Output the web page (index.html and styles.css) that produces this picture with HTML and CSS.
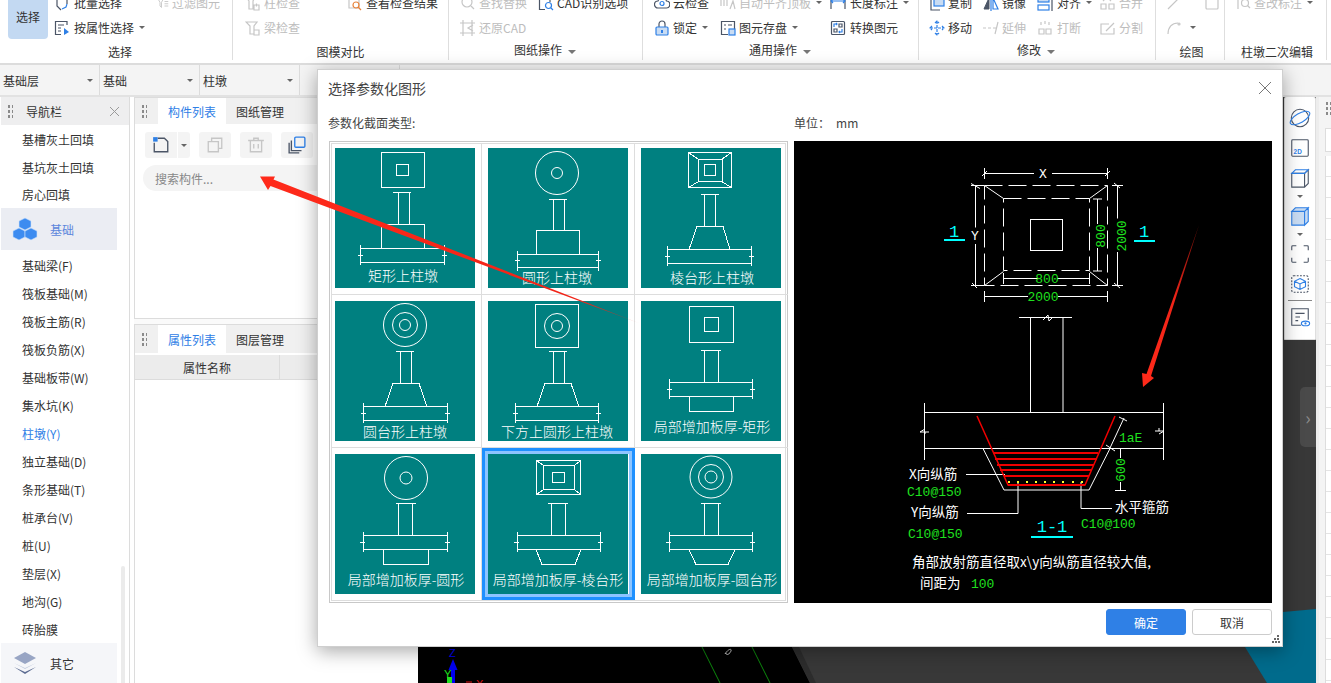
FILE: index.html
```html
<!DOCTYPE html>
<html lang="zh-CN">
<head>
<meta charset="utf-8">
<title>选择参数化图形</title>
<link rel="stylesheet" href="styles.css">
</head>
<body>
<header class="ribbon">
  <section class="group g1">
    <div class="cols">
      <button class="select-btn">选择</button>
      <div class="col c1">
        <div class="item"><svg class="ic" viewBox="0 0 16 16"><path class="dk" d="M3 1v10l4 4M13 1v8"/><path class="bl" d="M8 14l4-2 1-3"/></svg>批量选择</div>
        <div class="item"><svg class="ic" viewBox="0 0 16 16"><path class="dk" d="M13 5V1.500H1.500v13H7M4 5h6M4 8h3M4 11h3"/><path class="fb" d="M10 8l5 4-5 3z"/></svg>按属性选择<i class="caret"></i></div>
      </div>
      <div class="col">
        <div class="item off"><svg class="ic small" viewBox="0 0 16 16"><path class="gr" d="M1 2h8L6 7v7L4 12V7zM10 6h5M10 9h5M10 12h5"/></svg>过滤图元</div>
      </div>
    </div>
    <div class="title">选择</div>
  </section>
  <section class="group g2">
    <div class="cols">
      <div class="col c2">
        <div class="item off"><svg class="ic" viewBox="0 0 16 16"><path class="gr" d="M1 2h9l-2 4v8H4V6zM9 10h5v5H9zM11.500 8.500v3"/></svg>柱检查</div>
        <div class="item off"><svg class="ic" viewBox="0 0 16 16"><path class="gr" d="M1 2h11L9 6v8H5V6zM9 10h5v5H9z"/></svg>梁检查</div>
      </div>
      <div class="col">
        <div class="item"><svg class="ic" viewBox="0 0 16 16"><path class="gr" d="M2 1h10v12H2z"/><circle class="or" cx="9" cy="10" r="3"/><path class="or" d="M11 12l3 3"/></svg>查看检查结果</div>
      </div>
    </div>
    <div class="title">图模对比</div>
  </section>
  <section class="group g3">
    <div class="cols">
      <div class="col c3">
        <div class="item off"><svg class="ic" viewBox="0 0 16 16"><circle class="gr" cx="7" cy="7" r="5"/><path class="gr" d="M11 11l3 3"/></svg>查找替换</div>
        <div class="item off"><svg class="ic" viewBox="0 0 16 16"><path class="gr" d="M3 0v16M12 0v16M0 3h15M0 13h15M13 5L8 8l5 3"/></svg>还原CAD</div>
      </div>
      <div class="col">
        <div class="item"><svg class="ic" viewBox="0 0 16 16"><path class="dk" d="M12 7V1.500H1.500v13H7"/><circle class="bls" cx="10.500" cy="10.500" r="3"/><path class="bls" d="M13 13l2 2M4 4h5"/></svg>CAD识别选项</div>
      </div>
    </div>
    <div class="title raised">图纸操作<i class="caret big"></i></div>
  </section>
  <section class="group g4">
    <div class="cols">
      <div class="col c4a">
        <div class="item"><svg class="ic" viewBox="0 0 16 16"><path class="dk" d="M4 13a3.500 3.500 0 0 1 0-7 4.500 4.500 0 0 1 8.500 0 3.500 3.500 0 0 1-.5 7z"/><circle class="bls" cx="8" cy="8.500" r="2"/></svg>云检查</div>
        <div class="item"><svg class="ic" viewBox="0 0 16 16"><path class="dk" d="M5 7V4a3 3 0 0 1 6 0v3"/><rect class="lk" x="2" y="7" width="12" height="8" rx="1"/><path class="fb" d="M7 10h2v3H7z"/></svg>锁定<i class="caret"></i></div>
      </div>
      <div class="col c4b">
        <div class="item off"><svg class="ic" viewBox="0 0 16 16"><path class="gr" d="M1 2v9M4 2v9M7 2v9M10 14l3-8 2 8"/></svg>自动平齐顶板<i class="caret"></i></div>
        <div class="item"><svg class="ic" viewBox="0 0 16 16"><path class="dk" d="M8 14.500H1.500v-13h13V9M4 5h2M8 5h4M4 9h2"/><rect class="lk" x="9" y="9" width="6" height="6"/></svg>图元存盘<i class="caret"></i></div>
      </div>
      <div class="col">
        <div class="item"><svg class="ic wide" viewBox="0 0 16 16"><path class="dk" d="M1 2v12M15 2v12"/><path class="bls" d="M1 6h14M3 4L1 6l2 2M13 4l2 2-2 2"/></svg>长度标注<i class="caret"></i></div>
        <div class="item"><svg class="ic wide" viewBox="0 0 16 16"><rect class="dk" x="1.500" y="1.500" width="13" height="13" rx="1"/><path class="bls" d="M4 7V4h3M6 3l1 1-1 1M12 9v3H9M10 13l-1-1 1-1"/><path class="dk" d="M9 4h3v3H9zM4 9h3v3H4z"/></svg>转换图元</div>
      </div>
    </div>
    <div class="title raised">通用操作<i class="caret big"></i></div>
  </section>
  <section class="group g5">
    <div class="cols">
      <div class="col c5">
        <div class="item"><svg class="ic" viewBox="0 0 16 16"><path class="dk" d="M2 4v11h9"/><rect class="lk" x="5" y="1" width="10" height="10"/></svg>复制</div>
        <div class="item"><svg class="ic" viewBox="0 0 16 16"><path class="bls" d="M8 1v14M1 8h14M6 3l2-2 2 2M6 13l2 2 2-2M3 6L1 8l2 2M13 6l2 2-2 2" stroke-dasharray="3 1"/></svg>移动</div>
      </div>
      <div class="col c5">
        <div class="item"><svg class="ic" viewBox="0 0 16 16"><path class="fd" d="M1 14L6 3v11z"/><path class="bls" d="M10 3l5 11h-5zM8 1v15"/></svg>镜像</div>
        <div class="item off"><svg class="ic" viewBox="0 0 16 16"><path class="gr" d="M0 8h3M5 8h3M10 8h3M15 2l-3 12"/></svg>延伸</div>
      </div>
      <div class="col c5c">
        <div class="item"><svg class="ic wide" viewBox="0 0 16 16"><rect class="lk" x="1" y="2" width="11" height="5"/><rect class="bls" x="1" y="10" width="11" height="5"/><path class="dk" d="M15 1v15"/></svg>对齐<i class="caret"></i></div>
        <div class="item off"><svg class="ic wide" viewBox="0 0 16 16"><path class="gr" d="M2 9h5v5H2zM9 9h5v5H9zM4 2v3M8 1v3M12 2v3"/></svg>打断</div>
      </div>
      <div class="col">
        <div class="item off"><svg class="ic" viewBox="0 0 16 16"><path class="gr" d="M1 9h5v5H1zM9 9h5v5H9zM3 6l4-4 4 4"/></svg>合并</div>
        <div class="item off"><svg class="ic" viewBox="0 0 16 16"><path class="gr" d="M14 8v6H1V4h8M6 11l8-8"/></svg>分割</div>
      </div>
    </div>
    <div class="title raised">修改<i class="caret big"></i></div>
  </section>
  <section class="group g6">
    <div class="cols">
      <div class="col c6">
        <div class="item off"><svg class="ic" viewBox="0 0 16 16"><path class="gr" d="M2 14L14 2"/></svg></div>
        <div class="item off"><svg class="ic" viewBox="0 0 16 16"><path class="gr" d="M2 14C2 7 6 3 12 3"/><circle class="gr" cx="13" cy="4" r="1"/></svg><i class="caret"></i></div>
      </div>
      <div class="col">
        <div class="item off"><svg class="ic" viewBox="0 0 16 16"><rect class="gr" x="2" y="1" width="12" height="13" rx="1"/></svg></div>
      </div>
    </div>
    <div class="title">绘图</div>
  </section>
  <section class="group g7">
    <div class="cols">
      <div class="col">
        <div class="item off"><svg class="ic" viewBox="0 0 16 16"><path class="gr" d="M3 14V3h5"/><circle class="gr" cx="10" cy="8" r="3.500"/><path class="gr" d="M12.500 10.500L15 13"/></svg>查改标注<i class="caret"></i></div>
      </div>
    </div>
    <div class="title">柱墩二次编辑</div>
  </section>
</header>

<div class="selectors">
  <div class="sel-cell">基础层<i class="caret"></i></div>
  <div class="sel-cell">基础<i class="caret"></i></div>
  <div class="sel-cell">柱墩<i class="caret"></i></div>
  <div class="sel-cell"></div>
</div>

<main class="workspace">
  <nav class="nav">
    <div class="nav-head"><span class="grip"></span><span class="nav-title">导航栏</span><svg class="x-ic" viewBox="0 0 9 9"><path d="M0 0l9 9M9 0L0 9"/></svg></div>
    <div class="nav-item">基槽灰土回填</div>
    <div class="nav-item">基坑灰土回填</div>
    <div class="nav-item last">房心回填</div>
    <div class="nav-group active">
      <svg class="cubes" viewBox="0 0 26 24"><path class="cube" d="M13 1l6 3v6l-6 3-6-3V4z"/><path class="cube" d="M7 11l6 3v6l-6 3-6-3v-6z"/><path class="cube" d="M19 11l6 3v6l-6 3-6-3v-6z"/></svg>
      <span>基础</span>
    </div>
    <div class="nav-item first">基础梁(F)</div>
    <div class="nav-item">筏板基础(M)</div>
    <div class="nav-item">筏板主筋(R)</div>
    <div class="nav-item">筏板负筋(X)</div>
    <div class="nav-item">基础板带(W)</div>
    <div class="nav-item">集水坑(K)</div>
    <div class="nav-item current">柱墩(Y)</div>
    <div class="nav-item">独立基础(D)</div>
    <div class="nav-item">条形基础(T)</div>
    <div class="nav-item">桩承台(V)</div>
    <div class="nav-item">桩(U)</div>
    <div class="nav-item">垫层(X)</div>
    <div class="nav-item">地沟(G)</div>
    <div class="nav-item">砖胎膜</div>
    <div class="nav-group other">
      <svg class="cubes" viewBox="0 0 26 24"><path class="l1" d="M13 1l11 6-11 6L2 7z"/><path class="l2" d="M2 12l11 5 11-5-11 6z"/><path class="l3" d="M2 16l11 5 11-5-11 7z"/></svg>
      <span>其它</span>
    </div>
    <span class="nav-scroll"></span>
  </nav>

  <div class="middle">
    <section class="panel list-panel">
      <div class="tabs"><span class="grip"></span><span class="tab on">构件列表</span><span class="tab">图纸管理</span></div>
      <div class="tools">
        <span class="tool new"><svg class="ic tool-ic" viewBox="0 0 16 16"><path class="dk" d="M5 2h6l3 3v9H2V6"/><path class="fb" d="M1 1h4v4H1z"/></svg></span><span class="tool drop"><i class="caret"></i></span>
        <span class="tool"><svg class="ic tool-ic" viewBox="0 0 16 16"><path class="gr" d="M2 5h9v9H2zM5 5V2h9v9h-3"/></svg></span>
        <span class="tool"><svg class="ic tool-ic" viewBox="0 0 16 16"><path class="gr" d="M1 4h14M6 4V2h4v2M3 4v10h10V4M6 7v4M10 7v4"/></svg></span>
        <span class="tool"><svg class="ic tool-ic" viewBox="0 0 16 16"><path class="dk" d="M1 6v9h9M3 4v9h9"/><rect class="bls" x="6" y="1" width="9" height="9" rx="1"/></svg></span>
      </div>
      <div class="search">搜索构件...</div>
    </section>
    <section class="panel prop-panel">
      <div class="tabs tall"><span class="grip"></span><span class="tab on">属性列表</span><span class="tab">图层管理</span></div>
      <div class="table-head"><span class="th-name">属性名称</span><span class="th-val">属性值</span></div>
    </section>
  </div>

  <div class="canvas">
    <svg class="scene" viewBox="418 97 898 586" preserveAspectRatio="none">
      <path d="M418 97H792V647L810 683H418z" fill="#000"/>
      <path d="M792 647L810 683H816L799 647z" fill="#2c2c2c"/>
      <path d="M1283 612L1316 609V683H1267L1245 647z" fill="#006b8c"/>
      <path d="M702 647L720 683M752 647L770 683" stroke="#0c8a0c" fill="none"/>
      <path d="M725 654c3-5 7-6 6-3s-5 5-5 2" stroke="#ccc" fill="none" stroke-width="1"/>
      <path d="M451 683V670h-2.500l4.500-11 4.500 11H455v13z" fill="#0000f0"/>
      <text class="axis" x="449" y="657" fill="#0000f0">Z</text>
      <text class="axis" x="444" y="678" fill="#1fe01f">Y</text>
      <rect x="447" y="677" width="5" height="6" fill="#1fe01f"/>
      <text class="axis" x="476" y="688" fill="#e01010">X</text>
      <path d="M466 682h6" stroke="#e01010"/>
    </svg>
    <div class="view-tools">
      <svg class="vt" viewBox="0 0 24 24"><ellipse class="dk" cx="12" cy="12" rx="9.500" ry="9.500"/><ellipse class="bls" cx="12" cy="12" rx="12" ry="5" transform="rotate(-30 12 12)"/></svg>
      <svg class="vt" viewBox="0 0 24 24"><rect class="dk" x="3" y="3" width="18" height="18" rx="1"/><text class="twod" x="5" y="19">2D</text></svg>
      <svg class="vt cut" viewBox="0 0 24 24"><path class="dk" d="M3 7h14v15H3zM17 7l4-4v15l-4 4"/><path class="bls" d="M3 7l4-4h14l-4 4z"/></svg>
      <i class="caret vt-caret"></i>
      <svg class="vt cut" viewBox="0 0 24 24"><path class="lk" d="M3 7h14v15H3zM17 7l4-4v15l-4 4zM3 7l4-4h14l-4 4z"/></svg>
      <i class="caret vt-caret"></i>
      <svg class="vt" viewBox="0 0 24 24"><path class="dk" d="M3 8V4a1 1 0 0 1 1-1h4M16 3h4a1 1 0 0 1 1 1v4M21 16v4a1 1 0 0 1-1 1h-4M8 21H4a1 1 0 0 1-1-1v-4"/></svg>
      <svg class="vt" viewBox="0 0 24 24"><rect class="dk" x="3" y="3" width="18" height="18" rx="2" stroke-dasharray="2 1.500"/><path class="bls" d="M12 6l6 3v6l-6 3-6-3V9zM6 9l6 3 6-3M12 12v6"/></svg>
      <span class="vt-sep"></span>
      <svg class="vt" viewBox="0 0 24 24"><path class="dk" d="M13 21H3V3h18v12M7 8h10M7 12h5M7 16h3"/><ellipse class="bls" cx="18" cy="19" rx="4.500" ry="2.500"/><circle class="fb" cx="18" cy="19" r="1.200"/></svg>
    </div>
    <div class="handle"><span>›</span></div>
  </div>

  <aside class="side">
    <span class="grip side-grip"></span>
    <div class="side-tab"></div>
    <div class="side-rows"></div>
  </aside>
</main>

<div class="dialog">
  <div class="dlg-head"><span>选择参数化图形</span><svg class="x-ic big" viewBox="0 0 12 12"><path d="M0 0l12 12M12 0L0 12"/></svg></div>
  <div class="dlg-labels"><span class="lab-left">参数化截面类型:</span><span>单位：</span><span class="unit">mm</span></div>
  <div class="dlg-body">
    <div class="shapes">
      <div class="shape-grid">
        <div class="cell"><svg class="thumb" viewBox="0 0 140 140">
          <rect x="46.500" y="4.500" width="43" height="35"/><rect x="61.500" y="16.500" width="12" height="11"/>
          <path d="M58 44.500h18M63.500 44.500v32M74.500 44.500v32"/><path d="M46.500 100.500v-24h43v24"/>
          <path d="M25 100.500h84M25 114.500h84M25.500 97v20M109.500 97v20M23 107.500h5M107 107.500h5"/>
          <text x="68" y="133">矩形上柱墩</text></svg></div>
        <div class="cell"><svg class="thumb" viewBox="0 0 140 140">
          <circle cx="69" cy="25" r="21.500"/><circle cx="69" cy="25" r="5.500"/>
          <path d="M61 51.500h18M65.500 51.500v31M76.500 51.500v31"/><path d="M48.500 106.500v-24h43v24"/>
          <path d="M29 106.500h81M29 119.500h81M29.500 103v20M110.500 103v20M27 112.500h5M108 112.500h5"/>
          <text x="69" y="135">圆形上柱墩</text></svg></div>
        <div class="cell"><svg class="thumb" viewBox="0 0 140 140">
          <rect x="47.500" y="4.500" width="43" height="35"/><rect x="57.500" y="11.500" width="24" height="22"/><rect x="63.500" y="16.500" width="11" height="11"/>
          <path d="M47.500 4.500l10 7M90.500 4.500l-10 7M47.500 39.500l10-6M90.500 39.500l-10-6"/>
          <path d="M60 46.500h18M63.500 46.500v32M74.500 46.500v32M56 78.500h26M56 78.500l-8 23M82 78.500l7 23"/>
          <path d="M26 101.500h84M26 115.500h84M26.500 98v20M110.500 98v20M24 108.500h5M108 108.500h5"/>
          <text x="71" y="135">棱台形上柱墩</text></svg></div>
        <div class="cell"><svg class="thumb" viewBox="0 0 140 140">
          <circle cx="70" cy="24" r="21.500"/><circle cx="70" cy="24" r="12.500"/><circle cx="70" cy="24" r="5.500"/>
          <path d="M61 50.500h18M65.500 50.500v32M76.500 50.500v32M58 82.500h26M58 82.500l-8 23M84 82.500l8 23"/>
          <path d="M28 105.500h84M28 119.500h84M28.500 102v20M112.500 102v20M26 112.500h5M110 112.500h5"/>
          <text x="70" y="136">圆台形上柱墩</text></svg></div>
        <div class="cell"><svg class="thumb" viewBox="0 0 140 140">
          <rect x="47.500" y="3.500" width="43" height="43"/><circle cx="69" cy="25" r="12.500"/><circle cx="69" cy="25" r="5.500"/>
          <path d="M61 50.500h18M65.500 50.500v32M76.500 50.500v32M57 82.500h26M57 82.500l-8 23M83 82.500l8 23"/>
          <path d="M27 105.500h83M27 119.500h83M27.500 102v20M110.500 102v20M25 112.500h5M108 112.500h5"/>
          <text x="69" y="136">下方上圆形上柱墩</text></svg></div>
        <div class="cell"><svg class="thumb" viewBox="0 0 140 140">
          <rect x="48.500" y="5.500" width="44" height="36"/><rect x="63.500" y="16.500" width="14" height="14"/>
          <path d="M60 49.500h20M63.500 49.500v32M77.500 49.500v32"/>
          <path d="M28 81.500h83M28 95.500h83M28.500 78v20M111.500 78v20M26 88.500h5M109 88.500h5M48.500 95.500v15h44v-15"/>
          <text x="71" y="131">局部增加板厚-矩形</text></svg></div>
        <div class="cell"><svg class="thumb" viewBox="0 0 140 140">
          <circle cx="71" cy="24" r="21.500"/><circle cx="71" cy="24" r="6"/>
          <path d="M61 49.500h20M63.500 49.500v32M77.500 49.500v32"/>
          <path d="M28 81.500h84M28 95.500h84M28.500 78v20M112.500 78v20M25 88.500h5M110 88.500h5M48.500 95.500v15h45v-15"/>
          <text x="71" y="131">局部增加板厚-圆形</text></svg></div>
        <div class="cell selected"><svg class="thumb" viewBox="0 0 140 140">
          <rect x="48.500" y="6.500" width="44" height="34"/><rect x="55.500" y="11.500" width="31" height="24"/><rect x="64.500" y="18.500" width="12" height="10"/>
          <path d="M48.500 6.500l7 5M92.500 6.500l-6 5M48.500 40.500l7-5M92.500 40.500l-6-5"/>
          <path d="M60 49.500h20M63.500 49.500v32M77.500 49.500v32"/>
          <path d="M29 81.500h83M29 95.500h83M29.500 78v20M112.500 78v20M26 88.500h5M110 88.500h5M48 95.500l6 15h33l6-15"/>
          <text x="70" y="131">局部增加板厚-棱台形</text></svg></div>
        <div class="cell"><svg class="thumb" viewBox="0 0 140 140">
          <circle cx="70" cy="23" r="21"/><circle cx="70" cy="23" r="12.500"/><circle cx="70" cy="23" r="6"/>
          <path d="M60 49.500h20M63.500 49.500v32M77.500 49.500v32"/>
          <path d="M28 81.500h83M28 95.500h83M28.500 78v20M111.500 78v20M25 88.500h5M109 88.500h5M48 95.500l7 15h32l7-15"/>
          <text x="71" y="131">局部增加板厚-圆台形</text></svg></div>
      </div>
    </div>
    <svg class="preview" viewBox="794 141 478 462">
      <g class="w">
        <path d="M984 173.500h50M1052 173.500h56M984.500 168v11M1107.500 168v11M982 176l5-5M1105 176l5-5"/>
        <path class="dash-o" d="M984.500 185.500h123v100h-123z"/>
        <path class="dash-i" d="M1003.500 198.500h86v72h-86z"/>
        <path d="M984.500 185.500l19 13M1107.500 185.500l-18 13M984.500 285.500l19-14M1107.500 285.500l-18-14"/>
        <rect x="1030.500" y="219.500" width="32" height="31"/>
        <path d="M975.500 185.500v42M975.500 244v41.500M971 183.500l9 5M971 285.500h13M971 185.500h13M977 288l-5-5"/>
        <path d="M1117.500 185.500v33M1117.500 252v33.500M1112 185.500h11M1112 285.500h11M1114 183l6 5M1114 283l6 5"/>
        <path d="M1097.500 199v25M1097.500 248v23M1093 199h9M1093 271h9"/>
        <path d="M1003 278.500h36M1057 278.500h32M1003.500 273v11M1089.500 273v11"/>
        <path d="M984 296.500h44M1058 296.500h50M984.500 291v11M1107.500 291v11"/>
        <path d="M1019 317.500h53M1030.500 317.500v95M1063 317.500v95M1043 320l5-5 1 6 4-4"/>
        <path d="M924.500 403v57M1163.500 403v57M924 412.500h239M924 448.500h239"/>
        <path d="M920 432h9M920 432l5-3M925 432v2M1155 431h9M1164 431l-5 3M1159 431v-3"/>
        <path d="M983 448.500l21 41.500h85l21-41.500"/>
        <path d="M966 474.500h39M967 513.500h51V482M1112 508.500h-31V482"/>
        <path d="M1110 448l14-30M1106 445l9 6M1119 417l8 4M1120.500 448v10M1120.500 482v8M1115 490.500h11"/>
      </g>
      <g class="r">
        <path d="M977 416l31 69h77l30-69" stroke-width="1.500"/>
        <path d="M993 453h105M995 459h102M997 465h97M1000 470h92M1004 476h85M1008 485h77" stroke-width="2"/>
      </g>
      <g class="y">
        <path d="M1008 482h2M1017 482h2M1026 482h2M1035 482h2M1044 482h2M1053 482h2M1062 482h2M1072 482h2M1081 482h2"/>
      </g>
      <text class="cad white" x="1043" y="178" text-anchor="middle">X</text>
      <text class="cad white" x="975" y="240" text-anchor="middle">Y</text>
      <text class="cad green" x="1047" y="283" text-anchor="middle">800</text>
      <text class="cad green" x="1043" y="301" text-anchor="middle">2000</text>
      <text class="cad green" transform="translate(1105 236) rotate(-90)" text-anchor="middle">800</text>
      <text class="cad green" transform="translate(1126 236) rotate(-90)" text-anchor="middle">2000</text>
      <text class="cad cyan big" x="954" y="237" text-anchor="middle">1</text>
      <text class="cad cyan big" x="1144" y="237" text-anchor="middle">1</text>
      <path class="cy" d="M944 240h21M1134 241h21M1031 537h42"/>
      <text class="cad green" x="1119" y="442">1aE</text>
      <text class="cad green" transform="translate(1125 470) rotate(-90)" text-anchor="middle">600</text>
      <text class="cjk white" x="909" y="479">X向纵筋</text>
      <text class="cad green" x="907" y="496">C10@150</text>
      <text class="cjk white" x="911" y="517">Y向纵筋</text>
      <text class="cad green" x="908" y="538">C10@150</text>
      <text class="cjk white" x="1115" y="512">水平箍筋</text>
      <text class="cad green" x="1081" y="528">C10@100</text>
      <text class="cad cyan big" x="1052" y="532" text-anchor="middle">1-1</text>
      <text class="cjk white" x="912" y="567">角部放射筋直径取x\y向纵筋直径较大值,</text>
      <text class="cjk white" x="920" y="588">间距为</text>
      <text class="cad green" x="971" y="588">100</text>
    </svg>
  </div>
  <div class="dlg-foot">
    <button class="btn primary">确定</button>
    <button class="btn">取消</button>
    <svg class="resize" viewBox="0 0 8 8"><path d="M5 0h2v2H5zM2 3h2v2H2zM5 3h2v2H5zM0 6h2v2H0zM3 6h2v2H3zM6 6h2v2H6z"/></svg>
  </div>
</div>

<svg class="arrows" viewBox="0 0 1331 683">
  <defs>
    <linearGradient id="fadeA" gradientUnits="userSpaceOnUse" x1="261" y1="176" x2="640" y2="323">
      <stop offset="0" stop-color="#ff2a1a"/><stop offset=".86" stop-color="#f02418"/><stop offset="1" stop-color="#f02418" stop-opacity=".15"/>
    </linearGradient>
    <linearGradient id="fadeB" gradientUnits="userSpaceOnUse" x1="1199" y1="225" x2="1150" y2="376">
      <stop offset="0" stop-color="#6a0e08"/><stop offset=".5" stop-color="#f02418"/><stop offset="1" stop-color="#ff2a1a"/>
    </linearGradient>
  </defs>
  <path fill="url(#fadeA)" d="M260 176.500L275 176.500 273.500 179.500 640 323.500 270.500 186 268 190z"/>
  <path fill="url(#fadeB)" d="M1199 225L1151 376 1154 378 1143 387 1142 373 1146.500 374z"/>
</svg>
</body>
</html>
```

FILE: styles.css
```css
* { box-sizing: border-box; }
html, body { margin: 0; height: 100%; }
body {
  width: 1331px;
  height: 683px;
  overflow: hidden;
  position: relative;
  display: flex;
  flex-direction: column;
  background: #f0f0f0;
  font: 12px "Noto Sans CJK SC", "Liberation Sans", sans-serif;
  color: #333;
}
button { font: inherit; border: 0; padding: 0; }

/* shared svg stroke classes */
.dk { stroke: #4b5566; stroke-width: 1.2; fill: none; }
.bl, .bls { stroke: #2f80e6; stroke-width: 1.2; fill: none; }
.fb { fill: #2f80e6; stroke: none; }
.gr { stroke: #c6c6c6; stroke-width: 1.2; fill: none; }
.or { stroke: #e8843c; stroke-width: 1.2; fill: none; }
.lk { fill: #c9dcf3; stroke: #2f80e6; stroke-width: 1.2; }
.fd { fill: #4b5566; stroke: #4b5566; }

.caret {
  display: inline-block;
  width: 0;
  height: 0;
  margin-left: 5px;
  vertical-align: middle;
  border: 3px solid transparent;
  border-top: 3.500px solid #666;
  border-bottom: 0;
}
.caret.big { border-width: 4px 4px 0; border-top-color: #777; margin-left: 6px; }

/* ribbon */
.ribbon {
  display: flex;
  height: 65px;
  flex: none;
  background: #fff;
  border-bottom: 2px solid #dcdcdc;
  overflow: hidden;
}
.group {
  display: flex;
  flex-direction: column;
  height: 60px;
  flex: none;
  border-right: 1px solid #dedede;
}
.g1 { width: 233px; padding-left: 8px; }
.g2 { width: 216px; padding-left: 12px; }
.g3 { width: 194px; padding-left: 11px; }
.g4 { width: 276px; padding-left: 11px; }
.g5 { width: 237px; padding-left: 10px; }
.g6 { width: 69px; padding-left: 10px; }
.g7 { width: 102px; padding-left: 10px; }
.cols { display: flex; height: 50px; margin-top: -10px; flex: none; }
.select-btn {
  width: 40px;
  height: 49px;
  background: #c3d9f2;
  border-radius: 4px;
  color: #333;
  font-size: 12px;
  padding-top: 3px;
  margin-right: 6px;
  flex: none;
}
.col { display: flex; flex-direction: column; flex: none; }
.c1 { width: 103px; }
.c1 .ic { margin-right: 4px; }
.c2 { width: 102px; }
.c3 { width: 78px; }
.c4a { width: 66px; }
.c4b { width: 110px; }
.c5 { width: 54px; }
.c5c { width: 63px; }
.c6 { width: 38px; }
.item { display: flex; align-items: center; height: 25px; flex: none; white-space: nowrap; }
.item.off { color: #bdbdbd; }
.ic { width: 16px; height: 16px; margin-right: 3px; flex: none; }
.ic.wide { margin-right: 4px; }
.ic.small { width: 12px; margin-right: 3px; }
.title {
  margin-top: 3px;
  height: 17px;
  line-height: 17px;
  text-align: center;
  margin-left: -12px;
  white-space: nowrap;
  flex: none;
}
.title.raised { margin-top: 1px; }
.g1 .title { margin-left: 0; }
.g6 .title, .g7 .title { margin-left: -7px; }

/* selector row */
.selectors {
  display: flex;
  height: 32px;
  flex: none;
  background: #f4f4f4;
  border-bottom: 2px solid #e2e2e2;
}
.sel-cell {
  display: flex;
  align-items: center;
  justify-content: space-between;
  width: 100px;
  padding: 0 6px 0 3px;
  border-right: 1px solid #dcdcdc;
}

/* workspace */
.workspace { display: flex; flex: 1; min-height: 0; background: #fff; }
.grip {
  display: inline-block;
  width: 6px;
  height: 14px;
  flex: none;
  background-image: radial-gradient(circle, #8a8a8a 1.200px, transparent 1.500px);
  background-size: 4px 5px;
}
.x-ic { width: 9px; height: 9px; flex: none; }
.x-ic path { stroke: #9a9a9a; stroke-width: 1; fill: none; }
.x-ic.big { width: 12px; height: 12px; }
.x-ic.big path { stroke: #777; }
.nav {
  position: relative;
  width: 129px;
  margin-left: 1px;
  flex: none;
  background: #fff;
  border-right: 1px solid #dcdcdc;
}
.nav-head {
  display: flex;
  align-items: center;
  height: 28px;
  background: #eeeeef;
  padding: 0 10px 0 6px;
}
.nav-title { margin-left: 13px; flex: 1; }
.nav-item { display: flex; align-items: center; height: 28px; padding-left: 21px; }
.nav-item.last { height: 27px; }
.nav-item.first { margin-top: 1px; }
.nav-item.current { color: #2f80e6; }
.nav-group {
  display: flex;
  align-items: center;
  width: 116px;
  height: 42px;
  padding-left: 11px;
}
.nav-group span { margin-left: 12px; }
.nav-group.active { background: #ebedf3; color: #5c86dc; }
.nav-group.other { background: #f5f6f9; height: 40px; }
.cubes { width: 26px; height: 24px; flex: none; }
.cube { fill: #3d8cf0; stroke: #cfe2fb; stroke-width: .6; }
.l1 { fill: #98a5c4; }
.l2 { fill: #c5cddf; }
.l3 { fill: #5d6c92; }
.nav-scroll {
  position: absolute;
  right: 4px;
  top: 469px;
  bottom: 0;
  width: 4px;
  background: #ebebeb;
  border-radius: 2px 2px 0 0;
}

.middle {
  display: flex;
  flex-direction: column;
  gap: 5px;
  width: 284px;
  margin-left: 4px;
  flex: none;
  background: #fafafa;
}
.panel { background: #fff; border: 1px solid #dcdcdc; border-width: 1px 0 1px 1px; }
.list-panel { height: 222px; }
.prop-panel { flex: 1; border-bottom: 0; }
.tabs { display: flex; align-items: center; height: 26px; background: #f0f0f0; padding-left: 6px; }
.tabs.tall { height: 28px; }
.tab { display: flex; align-items: center; justify-content: center; width: 68px; height: 100%; }
.tabs .grip { margin-right: 11px; }
.tab.on { background: #fff; color: #2f80e6; }
.tools { display: flex; padding: 8px 0 0 10px; gap: 9px; }
.tool {
  display: flex;
  align-items: center;
  justify-content: center;
  width: 32px;
  height: 26px;
  background: #f4f4f4;
  border-radius: 3px;
}
.tool-ic { width: 18px; height: 18px; margin: 0; }
.tool.new { border-radius: 3px 0 0 3px; }
.tool.drop { width: 12px; margin-left: -8px; border-radius: 0 3px 3px 0; }
.tool.drop .caret { margin: 0; }
.search {
  display: flex;
  align-items: center;
  height: 26px;
  margin: 7px 0 0 8px;
  padding-left: 12px;
  background: #f4f4f4;
  border-radius: 13px;
  color: #888;
}
.table-head { display: flex; height: 25px; margin-top: 2px; background: #ececec; border-bottom: 1px solid #dcdcdc; }
.th-name { display: flex; align-items: center; justify-content: center; width: 145px; border-right: 1px solid #dcdcdc; }
.th-val { display: flex; align-items: center; justify-content: center; flex: 1; }

.canvas {
  position: relative;
  width: 898px;
  flex: none;
  background: #383838;
}
.scene { display: block; width: 100%; height: 100%; }
.view-tools {
  position: absolute;
  right: 0;
  top: -1px;
  display: flex;
  flex-direction: column;
  align-items: center;
  width: 32px;
  height: 244px;
  padding-top: 10px;
  background: #fff;
  border: 1px solid #dedede;
  border-radius: 3px 3px 0 0;
}
.vt { width: 22px; height: 22px; margin-bottom: 8px; flex: none; }
.vt.cut { margin-bottom: 3px; }
.vt-caret { margin: 3px 0 7px; flex: none; }
.twod { font: bold 7px "Liberation Sans", sans-serif; fill: #2f80e6; }
.vt-sep { width: 24px; height: 1px; background: #888; margin: -3px 0 5px; flex: none; }
.handle {
  position: absolute;
  right: 0;
  top: 290px;
  display: flex;
  align-items: center;
  justify-content: center;
  width: 16px;
  height: 60px;
  background: #4a4a4a;
  border-radius: 5px 0 0 5px;
  color: #8d8d8d;
  font-size: 18px;
}
.axis { font: 11px "Liberation Sans", sans-serif; }

.side { flex: 1; min-width: 0; background: #f4f4f4; padding: 4px 0 0 6px; border-left: 3px solid #ededed; }
.side-grip { display: block; }
.side-tab { height: 24px; margin-top: 13px; background: #fff; border: 1px solid #ddd; border-right: 0; }
.side-rows {
  height: 530px;
  margin-top: 4px;
  background: repeating-linear-gradient(#fff 0 20px, #e4e4e4 20px 21px);
  border-left: 1px solid #ddd;
}

/* dialog */
.dialog {
  position: absolute;
  left: 317px;
  top: 69px;
  width: 966px;
  height: 578px;
  background: #fff;
  border: 1px solid #cfcfcf;
  box-shadow: 0 4px 18px rgba(0, 0, 0, .35);
  display: flex;
  flex-direction: column;
}
.dlg-head {
  display: flex;
  align-items: center;
  justify-content: space-between;
  height: 37px;
  padding: 0 11px 2px 10px;
  flex: none;
  font-size: 14px;
  color: #444;
}
.dlg-labels {
  display: flex;
  height: 34px;
  flex: none;
  align-items: center;
  padding-left: 10px;
  padding-bottom: 4px;
  color: #444;
}
.lab-left { width: 466px; }
.unit { margin-left: 6px; }
.dlg-body { display: flex; gap: 6px; height: 462px; padding-left: 11px; flex: none; }
.shapes {
  width: 459px;
  height: 462px;
  padding: 2px;
  border: 1px solid #c8c8c8;
  box-shadow: inset 0 0 0 1px #fff, inset 0 0 0 2px #ddd;
  flex: none;
}
.shape-grid { display: grid; grid-template-columns: 150px 153px 153px; grid-template-rows: 151px 153px 152px; }
.cell { padding: 6px 0 0 6px; border-right: 1px solid #ddd; border-bottom: 1px solid #ddd; }
.cell:nth-child(3n+1) { padding-left: 3px; }
.cell:nth-child(-n+3) { padding-top: 4px; }
.cell:nth-child(3n) { border-right: 0; }
.cell:nth-child(n+7) { border-bottom: 0; }
.cell.selected { box-shadow: inset 0 0 0 3px #1e90ff, inset 0 0 0 6px #8cc4ff; border: 0; }
.thumb { display: block; width: 140px; height: 140px; background: #008080; shape-rendering: crispEdges; }
.thumb path, .thumb rect, .thumb circle { stroke: #fff; stroke-width: 1; fill: none; }
.thumb circle { shape-rendering: auto; }
.thumb text {
  fill: #fff;
  font: 300 14px "Noto Sans CJK SC", sans-serif;
  text-anchor: middle;
}
.preview { display: block; width: 478px; height: 462px; background: #000; flex: none; }
.preview .w path, .preview .w rect { stroke: #fff; stroke-width: 1; fill: none; }
.preview .w .dash-o { stroke-dasharray: 18 6; }
.preview .w .dash-i { stroke-dasharray: 18 6; }
.preview .r path { stroke: #f00000; fill: none; }
.preview .y path { stroke: #ffff30; stroke-width: 2; fill: none; }
.preview .cy { stroke: #00ffff; stroke-width: 2; fill: none; }
.cad { font: 13px "Liberation Mono", monospace; }
.cad.big { font-size: 17px; }
.cjk { font: 13.500px "Noto Sans CJK SC", "Liberation Mono", sans-serif; }
.white { fill: #fff; }
.green { fill: #1fe01f; }
.cyan { fill: #00ffff; }
.dlg-foot {
  position: relative;
  display: flex;
  justify-content: flex-end;
  gap: 6px;
  flex: 1;
  padding: 6px 10px 0 0;
}
.btn {
  width: 80px;
  height: 26px;
  background: #fff;
  border: 1px solid #ccc;
  border-radius: 3px;
  color: #333;
}
.btn.primary { background: #2f80e6; border-color: #2f80e6; color: #fff; }
.resize { position: absolute; right: 2px; bottom: 3px; width: 8px; height: 8px; }
.resize path { fill: #666; }

.arrows { position: absolute; left: 0; top: 0; width: 1331px; height: 683px; pointer-events: none; }
```
